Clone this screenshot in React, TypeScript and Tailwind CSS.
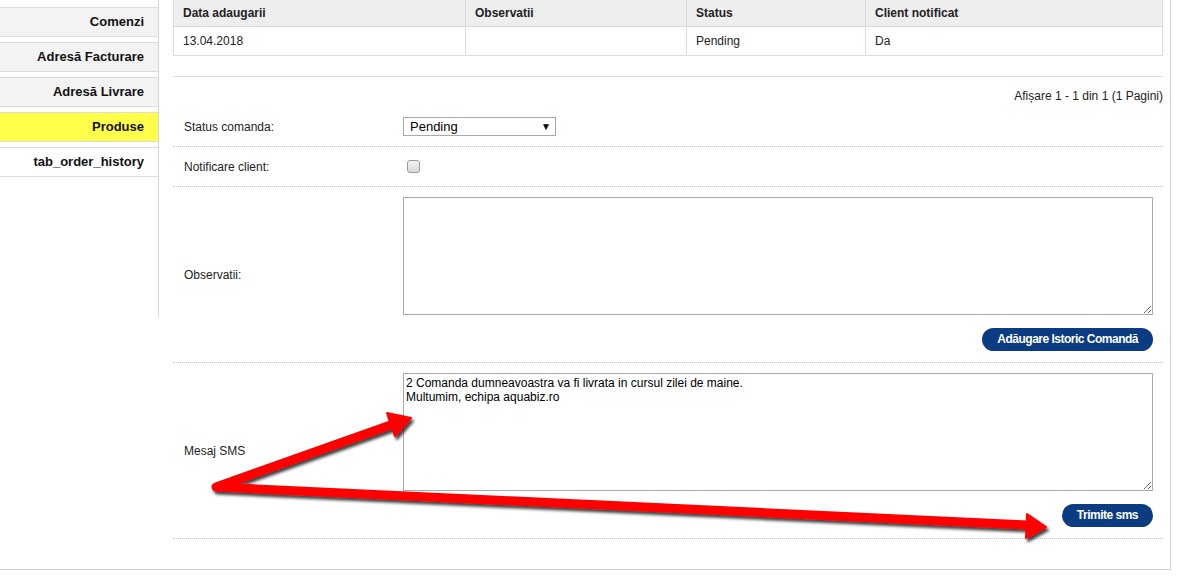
import React from 'react';

const tabs = [
  { label: 'Comenzi', bg: 'bg-[#f3f3f3]' },
  { label: 'Adresă Facturare', bg: 'bg-[#f3f3f3]' },
  { label: 'Adresă Livrare', bg: 'bg-[#f3f3f3]' },
  { label: 'Produse', bg: 'bg-[#ffff4a]' },
  { label: 'tab_order_history', bg: 'bg-white' },
];

const Arrows = () => (
  <svg className="absolute inset-0 pointer-events-none" width="1187" height="587" viewBox="0 0 1187 587">
    <defs>
      <filter id="shadow" x="-10%" y="-50%" width="120%" height="200%">
        <feDropShadow dx="2" dy="3" stdDeviation="1.6" floodColor="#000" floodOpacity="0.75" />
      </filter>
    </defs>
    <g filter="url(#shadow)" fill="#ff0000" stroke="#ff0000">
      <polyline points="392,424.5 216,487 1027,525" fill="none" strokeWidth="9" strokeLinejoin="round" strokeLinecap="round" />
      <polygon points="411,418 387,413 395,436" strokeWidth="2" strokeLinejoin="round" />
      <polygon points="1046,527 1027,514 1026,538" strokeWidth="2" strokeLinejoin="round" />
    </g>
  </svg>
);

const Button = ({ children }: { children: React.ReactNode }) => (
  <button className="h-[23px] px-[15px] rounded-[12px] bg-[#0b3b80] text-white text-[12px] font-bold tracking-[-0.5px] leading-[23px]">
    {children}
  </button>
);

const fieldFont = { fontFamily: '"Liberation Sans", Arial, sans-serif' };

export default function App() {
  return (
    <div className="relative w-[1187px] h-[587px] bg-white overflow-hidden text-[#222]" style={fieldFont}>
      <div className="flex w-[1171px] h-[570px] border-r border-b border-[#cfcfcf]">
        {/* sidebar */}
        <div className="w-[159px] h-[317px] border-r border-[#d5d5d5] pt-[7px] flex flex-col gap-[5px]">
          {tabs.map((t) => (
            <div key={t.label} className={`${t.bg} h-[30px] border-y border-[#dcdcdc] text-right pr-[14px] text-[13px] font-bold leading-[28px] text-[#111]`}>
              {t.label}
            </div>
          ))}
        </div>

        {/* content */}
        <div className="flex-1 pl-[14px] pr-[7px]">
          <table className="w-full border-collapse text-[12px] -mt-px">
            <thead>
              <tr className="bg-[#eeeeee]">
                <th className="w-[292px] h-[27px] border border-[#dcdcdc] px-[9px] text-left font-bold">Data adaugarii</th>
                <th className="w-[221px] border border-[#dcdcdc] px-[9px] text-left font-bold">Observatii</th>
                <th className="w-[179px] border border-[#dcdcdc] px-[9px] text-left font-bold">Status</th>
                <th className="border border-[#dcdcdc] px-[9px] text-left font-bold">Client notificat</th>
              </tr>
            </thead>
            <tbody>
              <tr>
                <td className="h-[29px] border border-[#dcdcdc] px-[9px]">13.04.2018</td>
                <td className="border border-[#dcdcdc] px-[9px]"></td>
                <td className="border border-[#dcdcdc] px-[9px]">Pending</td>
                <td className="border border-[#dcdcdc] px-[9px]">Da</td>
              </tr>
            </tbody>
          </table>

          <div className="mt-[20px] border-t border-[#dcdcdc] h-[31px] pt-[12px] text-right text-[12px] leading-[14px]">
            Afișare 1 - 1 din 1 (1 Pagini)
          </div>

          <div className="text-[12px]">
            <div className="flex items-center h-[40px] border-b border-dotted border-[#c4c4c4]">
              <div className="w-[230px] pl-[11px]">Status comanda:</div>
              <div className="w-[153px] h-[19px] border border-[#a9a9a9] flex items-center justify-between pl-[6px] pr-[4px] text-[13px] text-black">
                <span>Pending</span>
                <span className="text-[10px]">▼</span>
              </div>
            </div>

            <div className="flex items-center h-[40px] border-b border-dotted border-[#c4c4c4]">
              <div className="w-[230px] pl-[11px]">Notificare client:</div>
              <div className="ml-[4px] w-[13px] h-[13px] rounded-[3px] border border-[#9a9a9a] bg-gradient-to-b from-[#f2f2f2] to-[#d9d9d9]"></div>
            </div>

            <div className="flex border-b border-dotted border-[#c4c4c4]">
              <div className="w-[230px] pl-[11px] self-center">Observatii:</div>
              <div className="flex-1 pr-[10px] pt-[10px] pb-[11px] flex flex-col items-end">
                <textarea className="block w-full h-[118px] border border-[#a9a9a9] p-[2px] text-[12px] leading-[14px] text-black outline-none" style={fieldFont} />
                <div className="mt-[13px] flex">
                  <Button>Adăugare Istoric Comandă</Button>
                </div>
              </div>
            </div>

            <div className="flex border-b border-dotted border-[#c4c4c4]">
              <div className="w-[230px] pl-[11px] self-center">Mesaj SMS</div>
              <div className="flex-1 pr-[10px] pt-[10px] pb-[11px] flex flex-col items-end">
                <textarea
                  className="block w-full h-[118px] border border-[#a9a9a9] p-[2px] text-[12px] leading-[14px] text-black outline-none"
                  style={fieldFont}
                  defaultValue={'2 Comanda dumneavoastra va fi livrata in cursul zilei de maine.\nMultumim, echipa aquabiz.ro'}
                />
                <div className="mt-[13px] flex">
                  <Button>Trimite sms</Button>
                </div>
              </div>
            </div>
          </div>
        </div>
      </div>

      <Arrows />
    </div>
  );
}
